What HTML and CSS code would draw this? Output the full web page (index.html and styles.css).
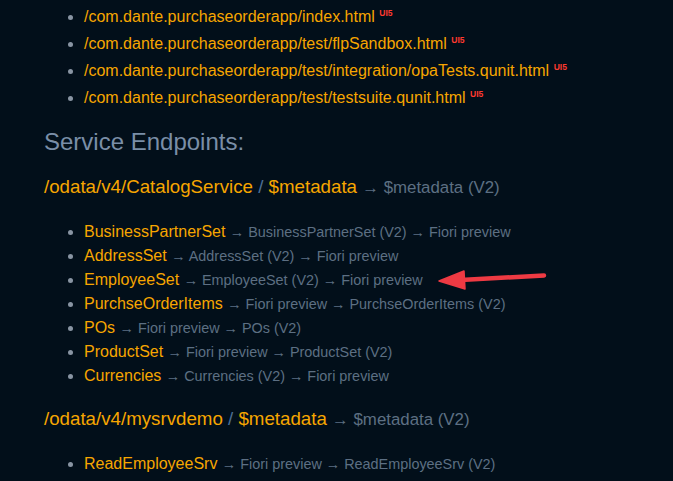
FILE: index.html
```html
<!DOCTYPE html>
<html>
<head>
<meta charset="utf-8">
<link rel="stylesheet" href="styles.css">
</head>
<body>
<main class="page">
  <ul class="apps">
    <li><a class="link">/com.dante.purchaseorderapp/index.html</a> <sup class="ui5">UI5</sup></li>
    <li><a class="link">/com.dante.purchaseorderapp/test/flpSandbox.html</a> <sup class="ui5">UI5</sup></li>
    <li><a class="link">/com.dante.purchaseorderapp/test/integration/opaTests.qunit.html</a> <sup class="ui5">UI5</sup></li>
    <li><a class="link">/com.dante.purchaseorderapp/test/testsuite.qunit.html</a> <sup class="ui5">UI5</sup></li>
  </ul>

  <h2 class="section">Service Endpoints:</h2>

  <h3 class="service"><a class="link">/odata/v4/CatalogService</a> <span class="sep">/</span> <a class="link">$metadata</a> <span class="preview">→ $metadata (V2)</span></h3>
  <ul class="entities">
    <li><a class="link">BusinessPartnerSet</a> <span class="preview">→ BusinessPartnerSet (V2) → Fiori preview</span></li>
    <li><a class="link">AddressSet</a> <span class="preview">→ AddressSet (V2) → Fiori preview</span></li>
    <li><a class="link">EmployeeSet</a> <span class="preview">→ EmployeeSet (V2) → Fiori preview</span></li>
    <li><a class="link">PurchseOrderItems</a> <span class="preview">→ Fiori preview → PurchseOrderItems (V2)</span></li>
    <li><a class="link">POs</a> <span class="preview">→ Fiori preview → POs (V2)</span></li>
    <li><a class="link">ProductSet</a> <span class="preview">→ Fiori preview → ProductSet (V2)</span></li>
    <li><a class="link">Currencies</a> <span class="preview">→ Currencies (V2) → Fiori preview</span></li>
  </ul>

  <h3 class="service"><a class="link">/odata/v4/mysrvdemo</a> <span class="sep">/</span> <a class="link">$metadata</a> <span class="preview">→ $metadata (V2)</span></h3>
  <ul class="entities">
    <li><a class="link">ReadEmployeeSrv</a> <span class="preview">→ Fiori preview → ReadEmployeeSrv (V2)</span></li>
    <li><a class="link">LoadEmployeeSrv</a> <span class="preview">→ Fiori preview → LoadEmployeeSrv (V2)</span></li>
  </ul>

  <svg class="annot" width="673" height="481" viewBox="0 0 673 481">
    <line x1="544" y1="275.5" x2="452" y2="280.5" stroke="#ee3a43" stroke-width="4.5" stroke-linecap="round"/>
    <polygon points="439,281 464,271 465,289" fill="#ee3a43" stroke="#ee3a43" stroke-width="1.5" stroke-linejoin="round"/>
  </svg>
</main>
</body>
</html>
```

FILE: styles.css
```css
html, body {
  margin: 0;
  padding: 0;
  background: #020f1a;
}

body {
  font-family: "Liberation Sans", Arial, sans-serif;
  font-size: 16px;
  color: #5d6f83;
  overflow: hidden;
  height: 481px;
}

.page {
  position: relative;
  padding: 3px 0 0 44px;
  height: 478px;
}

.link {
  color: #f7a600;
  text-decoration: none;
}

ul {
  margin: 0;
  padding-left: 40px;
}

li::marker {
  color: #8995a3;
}

.apps li {
  line-height: 27px;
}

.ui5 {
  color: #ff3a2f;
  font-size: 8.5px;
  font-weight: bold;
  vertical-align: 6px;
  line-height: 0;
}

.section {
  margin: 17px 0 0;
  font-size: 24px;
  font-weight: normal;
  line-height: 28px;
  color: #7a8ea7;
}

.service {
  margin: 20px 0 0;
  font-size: 18.72px;
  font-weight: normal;
  line-height: 22px;
}

.sep {
  color: #4f6f95;
}

.preview {
  font-size: 90%;
  color: #5d6f83;
}

.entities {
  margin-top: 21px;
}

.entities li {
  line-height: 24px;
}

.annot {
  position: absolute;
  left: 0;
  top: 0;
  pointer-events: none;
}
```
